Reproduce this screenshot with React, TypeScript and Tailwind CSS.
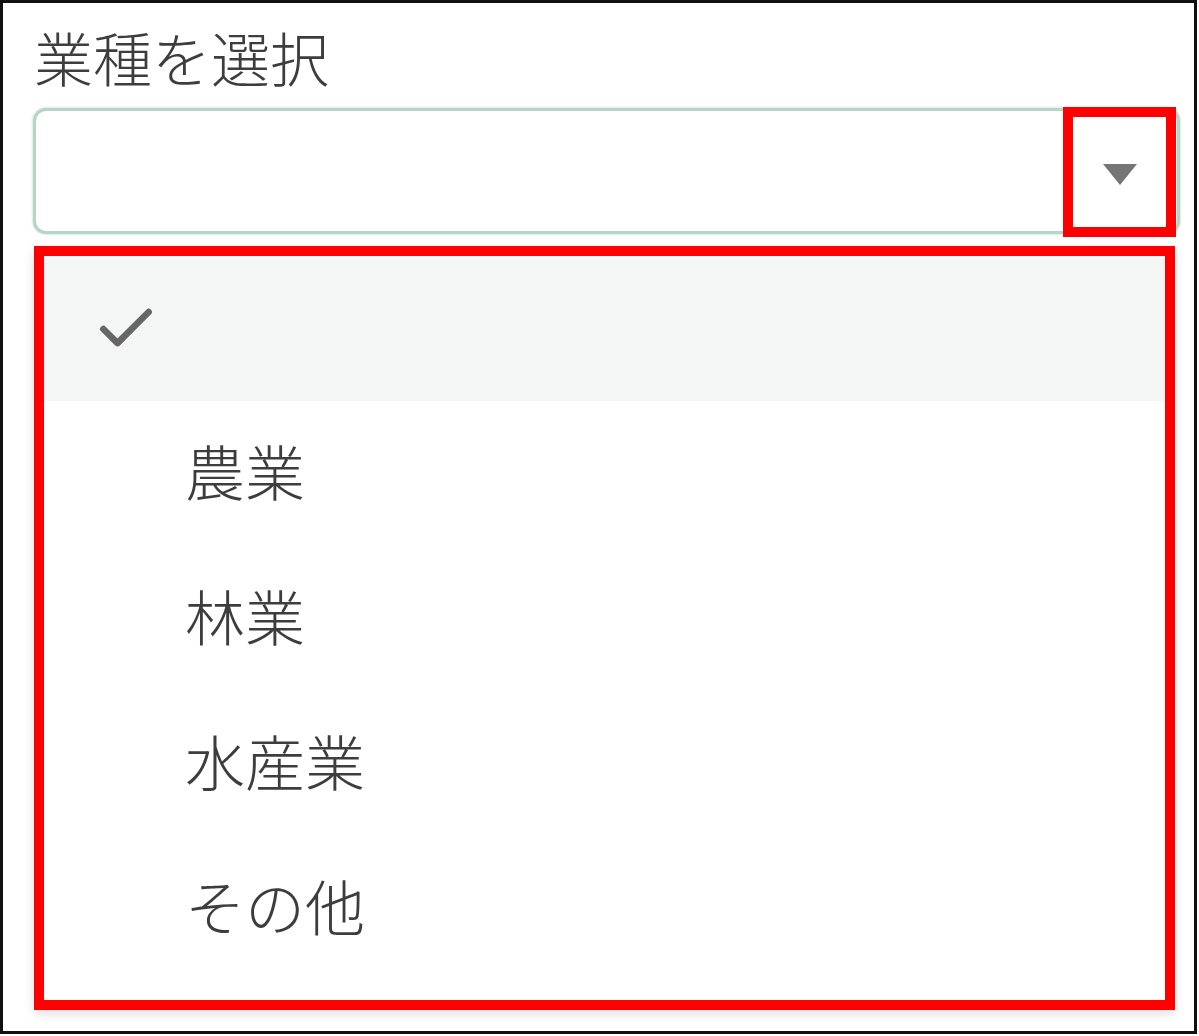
import { Check } from 'lucide-react';

const options = ['農業', '林業', '水産業', 'その他'];

export default function App() {
  return (
    <div className="w-[1199px] h-[1036px] bg-white">
      <div
        className="w-[1197px] h-[1034px] border-[3px] border-[#111] bg-white pt-[15px] pl-[29px] pr-[16px]"
        style={{ fontFamily: '"Noto Sans CJK JP", "Noto Sans", sans-serif' }}
      >
        <div className="text-[59px] leading-[78px] font-light text-[#3d3d3d] pl-[2px]">業種を選択</div>

        <div className="relative mt-[12px] ml-[1px] w-[1147px]">
          <div className="h-[126px] rounded-[13px] border-[3px] border-[#b6d5c7] shadow-[0_0_3px_#b6d5c7] bg-white" />
          <div className="absolute right-[4px] top-[-1px] w-[113px] h-[130px] border-[10px] border-[#ff0000] flex items-center justify-center">
            <svg width="36" height="23" viewBox="0 0 36 23" className="mt-[4px]">
              <polygon points="1,1 35,1 18,22" fill="#757575" />
            </svg>
          </div>
        </div>

        <div className="mt-[12px] ml-[2px] w-[1141px] border-[10px] border-[#ff0000] bg-white shadow-[0_4px_10px_rgba(0,0,0,0.12)] pb-[19px]">
          <div className="h-[145px] bg-[#f3f6f5] flex items-center pl-[48px]">
            <Check size={68} strokeWidth={2.3} color="#666" />
          </div>
          {options.map((o) => (
            <div key={o} className="h-[145px] flex items-center pl-[141px] text-[60px] font-light text-[#3d3d3d] leading-none pb-[8px]">
              {o}
            </div>
          ))}
        </div>
      </div>
    </div>
  );
}
